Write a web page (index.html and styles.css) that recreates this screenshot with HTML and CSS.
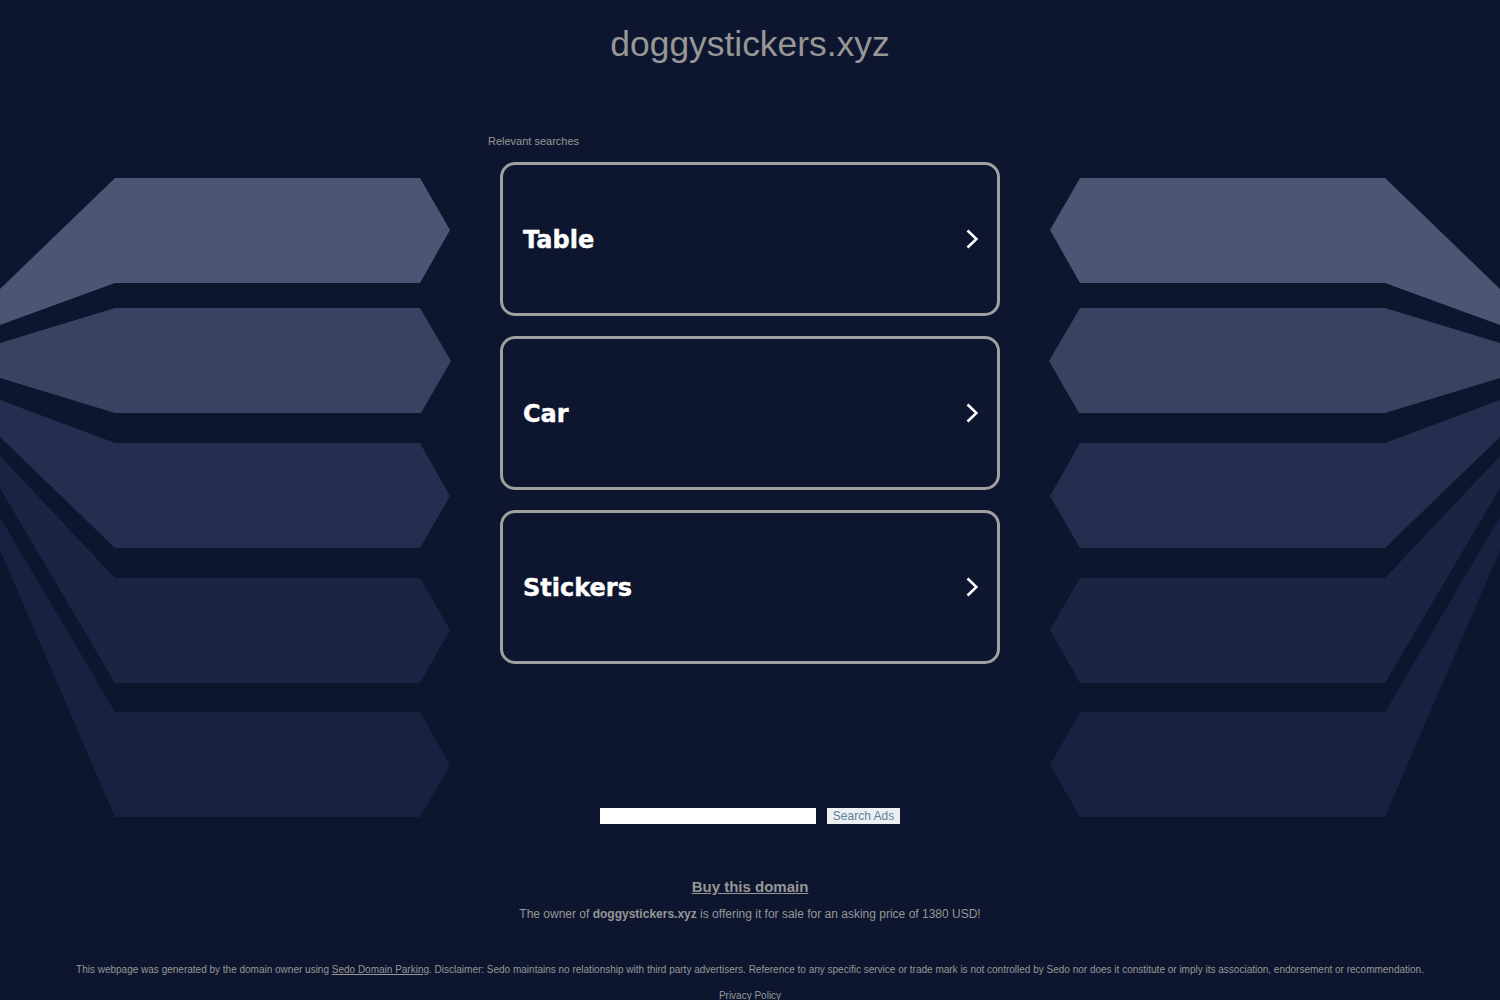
FILE: index.html
```html
<!DOCTYPE html>
<html lang="en">
<head>
    <meta charset="UTF-8">
    <meta name="viewport" content="width=device-width, initial-scale=1.0">
    <title>doggystickers.xyz</title>
    <link rel="stylesheet" href="styles.css">
</head>
<body>
    <svg class="backdrop" viewBox="0 0 1500 1000" aria-hidden="true">
        <defs>
            <g id="wing">
                <polygon fill="#172240" points="0,517 115,712 420,712 450,765 420,817 115,817 0,550"/>
                <polygon fill="#1a2544" points="0,456 115,578 420,578 450,630 420,683 115,683 0,488"/>
                <polygon fill="#242f4f" points="0,400 115,443 420,443 450,496 420,548 115,548 0,437"/>
                <polygon fill="#374361" points="0,343 115,308 420,308 451,361 421,413 115,413 0,378"/>
                <polygon fill="#4b5674" points="0,289 115,178 420,178 450,230 420,283 115,283 0,325"/>
            </g>
        </defs>
        <use href="#wing"/>
        <use href="#wing" transform="matrix(-1 0 0 1 1500 0)"/>
    </svg>

    <div class="page">
        <h1 class="domain">doggystickers.xyz</h1>

        <div class="results">
            <p class="results-label">Relevant searches</p>
            <a class="result" href="#">
                <span class="result-text">Table</span>
                <svg class="chevron" viewBox="0 0 12 20"><path d="M1.5 1.5l9 8.5-9 8.5"/></svg>
            </a>
            <a class="result" href="#">
                <span class="result-text">Car</span>
                <svg class="chevron" viewBox="0 0 12 20"><path d="M1.5 1.5l9 8.5-9 8.5"/></svg>
            </a>
            <a class="result" href="#">
                <span class="result-text">Stickers</span>
                <svg class="chevron" viewBox="0 0 12 20"><path d="M1.5 1.5l9 8.5-9 8.5"/></svg>
            </a>
        </div>

        <form class="search">
            <input class="search-input" type="text">
            <button class="search-button" type="button">Search Ads</button>
        </form>

        <div class="sale">
            <a class="sale-link" href="#">Buy this domain</a>
            <p class="sale-text">The owner of <b>doggystickers.xyz</b> is offering it for sale for an asking price of 1380 USD!</p>
        </div>

        <p class="disclaimer">This webpage was generated by the domain owner using <a href="#">Sedo Domain Parking</a>. Disclaimer: Sedo maintains no relationship with third party advertisers. Reference to any specific service or trade mark is not controlled by Sedo nor does it constitute or imply its association, endorsement or recommendation.</p>
        <a class="privacy" href="#">Privacy Policy</a>
    </div>
</body>
</html>
```

FILE: styles.css
```css
html, body {
    margin: 0;
    height: 100%;
    overflow: hidden;
}
body {
    font-family: "Liberation Sans", Arial, sans-serif;
    background-color: #0d162e;
    color: #979797;
}
.backdrop {
    position: absolute;
    top: 0;
    left: 0;
    width: 1500px;
    height: 1000px;
}
.page {
    position: relative;
    display: flex;
    flex-direction: column;
    align-items: center;
    height: 1000px;
}
.domain {
    margin: 23px 0 0;
    font-size: 35.4px;
    line-height: 42px;
    font-weight: normal;
    color: #979797;
}
.results {
    width: 500px;
    margin-top: 70px;
    display: flex;
    flex-direction: column;
    gap: 20px;
}
.results-label {
    margin: 0 0 -6px -12px;
    font-size: 11px;
    line-height: 13px;
    color: #979797;
}
.result {
    box-sizing: border-box;
    height: 154px;
    padding: 0 19px 0 20px;
    display: flex;
    align-items: center;
    justify-content: space-between;
    border: 3px solid #a0a0a0;
    border-radius: 15px;
    color: #fff;
    font-family: "DejaVu Sans", Verdana, sans-serif;
    font-size: 24px;
    font-weight: bold;
    text-decoration: none;
}
.result-text {
    padding-top: 2px;
    -webkit-text-stroke: 0.4px #fff;
}
.chevron {
    width: 12px;
    height: 20px;
    fill: none;
    stroke: #fff;
    stroke-width: 2.6;
}
.search {
    margin-top: 144px;
    display: flex;
    gap: 11px;
}
.search-input {
    box-sizing: border-box;
    width: 216px;
    height: 16px;
    padding: 0;
    border: none;
    background: #fff;
}
.search-button {
    box-sizing: border-box;
    width: 73px;
    height: 16px;
    padding: 0;
    border: none;
    background: #edf0f3;
    color: #5f7f9a;
    font-family: inherit;
    font-size: 12px;
}
.sale {
    margin-top: 54px;
    text-align: center;
}
.sale-link {
    font-size: 15px;
    line-height: 18px;
    font-weight: bold;
    color: #979797;
}
.sale-text {
    margin: 11px 0 0;
    font-size: 12px;
    line-height: 14px;
}
.disclaimer {
    margin: 43px 0 0;
    font-size: 10px;
    line-height: 11px;
    color: #979797;
}
.disclaimer a {
    color: inherit;
}
.privacy {
    margin-top: 15px;
    font-size: 10px;
    line-height: 11px;
    color: #979797;
    text-decoration: none;
}
```
